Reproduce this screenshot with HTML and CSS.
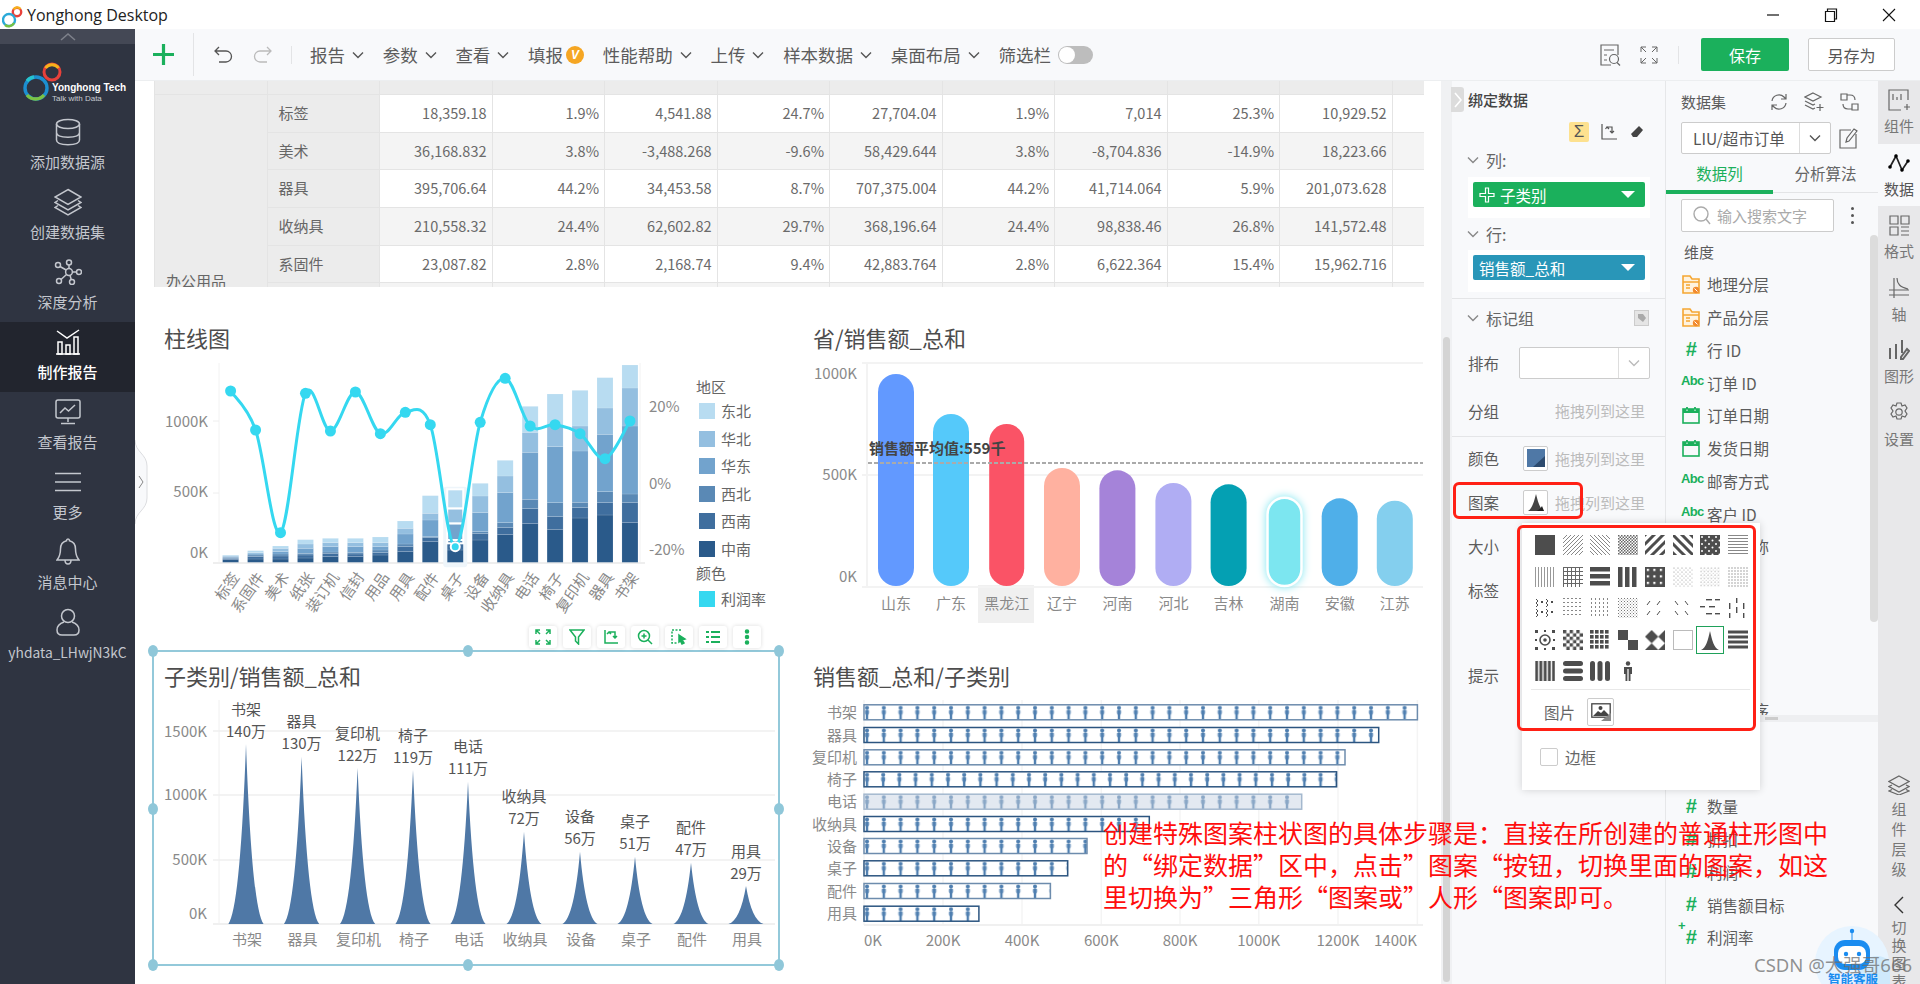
FILE: index.html
```html
<!DOCTYPE html>
<html lang="zh">
<head>
<meta charset="utf-8">
<title>Yonghong Desktop</title>
<link rel="stylesheet" href="styles.css">
</head>
<body>
<svg class="defs" width="0" height="0">
  <symbol id="chev" viewBox="0 0 12 8"><path d="M1 1.5l5 5 5-5" fill="none" stroke="currentColor" stroke-width="1.4"/></symbol>
  <symbol id="folder" viewBox="0 0 20 20"><path d="M2 2h7l2 3h7v14H2z" fill="#fff3df" stroke="#f5a733" stroke-width="1.6"/><path d="M2 8h16M5 11h4M5 14h4" stroke="#f5a733" stroke-width="1.3"/><circle cx="15" cy="16" r="3.2" fill="#f28a2e"/><path d="M13.5 14.5l3 3" stroke="#fff"/></symbol>
  <symbol id="cal" viewBox="0 0 20 20"><rect x="2" y="4" width="16" height="14" fill="none" stroke="#1bb05c" stroke-width="1.6"/><path d="M2 4h16v4H2z" fill="#1bb05c"/><path d="M6 2v4M14 2v4" stroke="#1bb05c" stroke-width="1.8"/><path d="M6 4.5v1.5M14 4.5v1.5" stroke="#fff"/></symbol>
</svg>

<header class="titlebar">
  <svg class="tlogo" width="22" height="26" viewBox="0 0 22 26">
    <circle cx="15" cy="9" r="4.2" fill="none" stroke="#e8413b" stroke-width="2.4"/>
    <path d="M11.5 6.5a4.2 4.2 0 0 1 7-.5" fill="none" stroke="#f6b21b" stroke-width="2.4"/>
    <circle cx="7" cy="17" r="6" fill="none" stroke="#2aa9d8" stroke-width="2.4"/>
    <path d="M3 22a6 6 0 0 0 9-2" fill="none" stroke="#75c043" stroke-width="2.4"/>
  </svg>
  <span class="ttext">Yonghong Desktop</span>
  <div class="winbtns">
    <svg width="14" height="14" viewBox="0 0 14 14"><path d="M1 7h12" stroke="#111" stroke-width="1.2"/></svg>
    <svg width="14" height="14" viewBox="0 0 14 14"><path d="M1.5 3.5h9v10h-9zM3.5 3.5v-2.5h9v10h-2" fill="none" stroke="#111" stroke-width="1.2"/></svg>
    <svg width="14" height="14" viewBox="0 0 14 14"><path d="M1 1l12 12M13 1L1 13" stroke="#111" stroke-width="1.1"/></svg>
  </div>
</header>

<div class="app">
  <aside class="sidebar">
    <div class="sb-handle"><svg width="16" height="9" viewBox="0 0 16 9"><path d="M1 8l7-6 7 6" fill="none" stroke="#7d808a" stroke-width="1.6"/></svg></div>
    <div class="sb-logo">
      <svg width="42" height="42" viewBox="0 0 42 42" class="logo-rings">
        <circle cx="29" cy="11" r="8" fill="none" stroke="#e8413b" stroke-width="3"/>
        <path d="M22.5 7a8 8 0 0 1 13 0" fill="none" stroke="#f6b21b" stroke-width="3"/>
        <circle cx="13" cy="27" r="11" fill="none" stroke="#1c8fd0" stroke-width="3.4"/>
        <path d="M4 34a11 11 0 0 0 17 0" fill="none" stroke="#7cc243" stroke-width="3.4"/>
        <path d="M4 20a11 11 0 0 1 7-4" fill="none" stroke="#26c3cf" stroke-width="3.4"/>
      </svg>
      <div class="logo-text"><b>Yonghong Tech</b><i>Talk with Data</i></div>
    </div>
    <a class="sb-item"><span class="sb-ic"><svg width="26" height="28" viewBox="0 0 26 28" class="ln"><ellipse cx="13" cy="6" rx="11.5" ry="4.6"/><path d="M1.5 6v16c0 3 5 4.7 11.5 4.7S24.500 25 24.500 22V6M1.500 14.500c0 3 5 4.700 11.500 4.700s11.500-1.700 11.500-4.700"/></svg></span><span>添加数据源</span></a>
    <a class="sb-item"><span class="sb-ic"><svg width="28" height="28" viewBox="0 0 28 28" class="ln"><path d="M14 1.500L27 9 14 16.500 1 9zM4 12.500L1 14.500 14 22 27 14.500l-3-2M4 17.500L1 19.500 14 27l13-7.500-3-2"/></svg></span><span>创建数据集</span></a>
    <a class="sb-item"><span class="sb-ic"><svg width="28" height="26" viewBox="0 0 28 26" class="ln"><circle cx="15" cy="13" r="3.400"/><circle cx="15" cy="3.500" r="2.500"/><circle cx="4" cy="6" r="2.500"/><circle cx="25" cy="13" r="2.500"/><circle cx="5" cy="22" r="2.500"/><circle cx="18" cy="23" r="2.500"/><path d="M15 6v3.600M6 7.500l6.200 3.500M18.400 13h4.100M7 20.500l5.500-5M16 16.300l1.300 4.400"/></svg></span><span>深度分析</span></a>
    <a class="sb-item sb-active"><span class="sb-ic"><svg width="26" height="26" viewBox="0 0 26 26" class="ln"><path d="M2 2l10 7 12-8M1 25h24"/><path d="M3 13h4v12H3zM11 16h4v9h-4zM19 8h4v17h-4z"/></svg></span><span>制作报告</span></a>
    <a class="sb-item"><span class="sb-ic"><svg width="26" height="26" viewBox="0 0 26 26" class="ln"><rect x="1" y="1" width="24" height="18" rx="2"/><path d="M5 14l5-5 3.500 3L20 6M13 19v4M6 24.500h14"/></svg></span><span>查看报告</span></a>
    <a class="sb-item"><span class="sb-ic"><svg width="26" height="20" viewBox="0 0 26 20" class="ln"><path d="M0 1.500h26M0 10h26M0 18.500h26"/></svg></span><span>更多</span></a>
    <a class="sb-item"><span class="sb-ic"><svg width="24" height="28" viewBox="0 0 24 28" class="ln"><path d="M12 1c-1 0-1.500.700-1.500 1.800C6.500 3.800 4.500 7 4.500 11c0 5-1 8-3.500 11h22c-2.500-3-3.500-6-3.500-11 0-4-2-7.200-6-8.200C13.500 1.700 13 1 12 1zM9 22c0 2.500 1.300 4 3 4s3-1.500 3-4"/></svg></span><span>消息中心</span></a>
    <a class="sb-item"><span class="sb-ic"><svg width="24" height="28" viewBox="0 0 24 28" class="ln"><circle cx="12" cy="8" r="6.500"/><path d="M8 14C3.500 15.500 1 18.500 1 22c0 3 2 5 5 5h12c3 0 5-2 5-5 0-3.500-2.500-6.500-7-8"/></svg></span><span class="sb-user">yhdata_LHwjN3kC</span></a>
  </aside>

  <main class="main">
    <nav class="toolbar">
      <svg class="t-plus" width="21" height="21" viewBox="0 0 21 21"><path d="M10.500 0v21M0 10.500h21" stroke="#1bb05c" stroke-width="3.200"/></svg>
      <i class="t-sep tall"></i>
      <svg class="t-undo" width="19" height="17" viewBox="0 0 19 17"><path d="M5 1L1 5l4 4M1 5h11a5.500 5.500 0 0 1 0 11H5" fill="none" stroke="#555" stroke-width="1.300"/></svg>
      <svg class="t-undo" width="19" height="17" viewBox="0 0 19 17"><path d="M14 1l4 4-4 4M18 5H7a5.500 5.500 0 0 0 0 11h7" fill="none" stroke="#bbb" stroke-width="1.300"/></svg>
      <i class="t-sep short"></i>
      <div class="menu">
        <span class="mi">报告<svg width="12" height="8"><use href="#chev"/></svg></span>
        <span class="mi">参数<svg width="12" height="8"><use href="#chev"/></svg></span>
        <span class="mi">查看<svg width="12" height="8"><use href="#chev"/></svg></span>
        <span class="mi">填报<b class="vbadge">V</b></span>
        <span class="mi">性能帮助<svg width="12" height="8"><use href="#chev"/></svg></span>
        <span class="mi">上传<svg width="12" height="8"><use href="#chev"/></svg></span>
        <span class="mi">样本数据<svg width="12" height="8"><use href="#chev"/></svg></span>
        <span class="mi">桌面布局<svg width="12" height="8"><use href="#chev"/></svg></span>
        <span class="mi">筛选栏<i class="toggle"></i></span>
      </div>
      <div class="t-right">
        <svg width="21" height="22" viewBox="0 0 21 22" class="gline"><path d="M18 11V1H1v20h10M4 6h10M4 11h3M4 16h3"/><circle cx="14" cy="15" r="4.500"/><path d="M17 18.500l3 3"/></svg>
        <svg class="t-full" width="18" height="18" viewBox="0 0 18 18"><path d="M6 1H1v5M1 1l5 5M12 1h5v5M17 1l-5 5M6 17H1v-5M1 17l5-5M12 17h5v-5M17 17l-5-5" fill="none" stroke="#666"/></svg>
        <i class="t-sep short right"></i>
        <button class="btn save">保存</button>
        <button class="btn saveas">另存为</button>
      </div>
    </nav>

    <div class="work">
      <section class="canvas">
        <div class="edge"><svg width="13" height="84" viewBox="0 0 13 84"><path d="M0 0c0 12 12 14 12 26v32c0 12-12 14-12 26" fill="#f8f9fb" stroke="#dcdde0"/><path d="M4 36l4 6-4 6" fill="none" stroke="#888"/></svg></div>
        <div class="table-wrap">
          <table class="grid-table">
            <colgroup><col><col><col><col><col><col><col><col><col><col><col><col></colgroup>
            <thead><tr><th></th><th></th><th>销售额</th><th>销售额占比</th><th>利润</th><th>利润率</th><th>销售额</th><th>销售额占比</th><th>利润</th><th>利润率</th><th>销售额</th><th>销售</th></tr></thead>
            <tbody>
              <tr><td class="head group" rowspan="6">办公用品</td><td class="head">标签</td><td>18,359.18</td><td>1.9%</td><td>4,541.88</td><td>24.7%</td><td>27,704.04</td><td>1.9%</td><td>7,014</td><td>25.3%</td><td>10,929.52</td><td></td></tr>
              <tr class="alt"><td class="head">美术</td><td>36,168.832</td><td>3.8%</td><td>-3,488.268</td><td>-9.6%</td><td>58,429.644</td><td>3.8%</td><td>-8,704.836</td><td>-14.9%</td><td>18,223.66</td><td></td></tr>
              <tr><td class="head">器具</td><td>395,706.64</td><td>44.2%</td><td>34,453.58</td><td>8.7%</td><td>707,375.004</td><td>44.2%</td><td>41,714.064</td><td>5.9%</td><td>201,073.628</td><td></td></tr>
              <tr class="alt"><td class="head">收纳具</td><td>210,558.32</td><td>24.4%</td><td>62,602.82</td><td>29.7%</td><td>368,196.64</td><td>24.4%</td><td>98,838.46</td><td>26.8%</td><td>141,572.48</td><td></td></tr>
              <tr><td class="head">系固件</td><td>23,087.82</td><td>2.8%</td><td>2,168.74</td><td>9.4%</td><td>42,883.764</td><td>2.8%</td><td>6,622.364</td><td>15.4%</td><td>15,962.716</td><td></td></tr>
              <tr class="alt"><td class="head"></td><td></td><td></td><td></td><td></td><td></td><td></td><td></td><td></td><td></td><td></td></tr>
            </tbody>
          </table>
        </div>
        <div class="charts">
          <article class="widget">
            <h2 class="w-title left">柱线图</h2>
            <div id="combo"></div>
            <div class="chart-tools">
              <span class="tool"><svg width="16" height="16" viewBox="0 0 16 16"><path d="M5 1H1v4M11 1h4v4M5 15H1v-4M11 15h4v-4M1 1l4 4M15 1l-4 4M1 15l4-4M15 15l-4-4"/></svg></span>
              <span class="tool"><svg width="16" height="16" viewBox="0 0 16 16"><path d="M1 1h14L9.500 8v7L6.500 12V8z"/></svg></span>
              <span class="tool"><svg width="16" height="16" viewBox="0 0 16 16"><path d="M2 1v13h13M6 3h6v6M4 5l2-2 2 2M10 7l2 2 2-2"/></svg></span>
              <span class="tool"><svg width="16" height="16" viewBox="0 0 16 16"><circle cx="7" cy="7" r="5.500"/><path d="M11 11l4 4M7 4.500v5M4.500 7h5"/></svg></span>
              <span class="tool"><svg width="16" height="16" viewBox="0 0 16 16"><path d="M10 1H1v13h5" stroke-dasharray="2 1.500"/><path d="M8 6l6 4-3 1 2 3-2 1-1.500-3L8 13z" fill="#1bb05c"/></svg></span>
              <span class="tool"><svg width="16" height="16" viewBox="0 0 16 16"><path d="M1 3h3M6 3h9M1 8h3M6 8h9M1 13h3M6 13h9" stroke-width="2.200"/></svg></span>
              <span class="tool"><svg width="16" height="16" viewBox="0 0 16 16"><circle cx="8" cy="2.500" r="1.500" fill="#1bb05c"/><circle cx="8" cy="8" r="1.500" fill="#1bb05c"/><circle cx="8" cy="13.500" r="1.500" fill="#1bb05c"/></svg></span>
            </div>
          </article>
          <article class="widget">
            <h2 class="w-title">省/销售额_总和</h2>
            <div id="pills"></div>
          </article>
          <article class="widget selected">
            <h2 class="w-title left">子类别/销售额_总和</h2>
            <div id="spikes"></div>
            <div class="sel-box">
              <i class="hd tl"></i><i class="hd tm"></i><i class="hd tr"></i><i class="hd ml"></i><i class="hd mr"></i><i class="hd bl"></i><i class="hd bm"></i><i class="hd br"></i>
            </div>
          </article>
          <article class="widget">
            <h2 class="w-title">销售额_总和/子类别</h2>
            <div id="people"></div>
          </article>
        </div>
      </section>

      <div class="gutter"><i></i></div>

      <section class="bind">
        <div class="b-handle"><svg width="8" height="16" viewBox="0 0 8 16"><path d="M1 1l6 7-6 7" fill="none" stroke="#fff" stroke-width="1.600"/></svg></div>
        <div class="b-head">绑定数据</div>
        <div class="b-icons">
          <span class="sigma">Σ</span>
          <svg width="17" height="19" viewBox="0 0 17 19"><path d="M1 1v15h15M6 4h5v6M4.500 6L6 4l2 2M9 8l2 2 2-2" fill="none" stroke="#555" stroke-width="1.200"/></svg>
          <svg width="14" height="14" viewBox="0 0 14 14"><path d="M9 1l4 4-6 7H3L1 9z" fill="#444"/></svg>
        </div>
        <div class="b-sect"><svg width="12" height="8"><use href="#chev"/></svg><span>列:</span></div>
        <div class="pillbox"><div class="pill green"><svg class="p-plus" width="16" height="16" viewBox="0 0 16 16"><path d="M6.500 1h3v5.500H15v3H9.500V15h-3V9.500H1v-3h5.500z" fill="none" stroke="#fff" stroke-width="1.200"/></svg><span>子类别</span><i class="tri"></i></div></div>
        <div class="b-sect second"><svg width="12" height="8"><use href="#chev"/></svg><span>行:</span></div>
        <div class="pillbox tall"><div class="pill blue"><span>销售额_总和</span><i class="tri"></i></div></div>
        <div class="b-rule"></div>
        <div class="b-sect marks"><svg width="12" height="8"><use href="#chev"/></svg><span>标记组</span><svg class="tag" width="15" height="16" viewBox="0 0 15 16"><rect x=".5" y=".5" width="14" height="15" fill="#e5e5e5" stroke="#ccc"/><path d="M4 4h5l3 4-3 4-5-4z" fill="#aaa"/></svg></div>
        <div class="f-row sel-row"><label>排布</label><div class="f-select"><i></i><svg width="12" height="8"><use href="#chev"/></svg></div></div>
        <div class="f-row group-row"><label>分组</label><span class="hint">拖拽列到这里</span></div>
        <div class="f-row color-row"><label>颜色</label><span class="swatch"><svg width="18" height="18" viewBox="0 0 18 18"><rect width="18" height="18" fill="#4f78a6"/><path d="M18 7v11H6z" fill="#2c4a6e"/></svg></span><span class="hint">拖拽列到这里</span></div>
        <div class="f-row"><label>图案</label><span class="swatch"><svg width="18" height="18" viewBox="0 0 18 18"><path d="M1 18C5 16 7 9 9 1c2 8 4 15 8 17z" fill="#444"/><path d="M9 18c3-1 5-3 6-5l2 5z" fill="#222"/></svg></span><span class="hint">拖拽列到这里</span></div>
        <div class="f-row"><label>大小</label></div>
        <div class="f-row"><label>标签</label></div>
        <div class="f-row tip-row"><label>提示</label></div>

        <div class="popup">
          <div class="pat-grid" id="patGrid"></div>
          <div class="pop-rule"></div>
          <div class="pop-pic"><span>图片</span><span class="pic-btn"><svg width="20" height="18" viewBox="0 0 20 18"><rect x=".8" y=".8" width="18.400" height="13.400" fill="#fff" stroke="#444" stroke-width="1.300"/><path d="M2 13l5-5 3 2 3-3 6 6z" fill="#444"/><circle cx="9.500" cy="5" r="2" fill="#444"/><path d="M20 10v8H10z" fill="#888"/></svg></span></div>
          <div class="pop-check"><i></i><span>边框</span></div>
        </div>
        <div class="redbox one"></div>
        <div class="redbox two"></div>
      </section>

      <section class="data">
        <div class="d-head"><span>数据集</span>
          <div class="d-icons">
            <svg width="20" height="20" viewBox="0 0 20 20" class="gline"><path d="M3 9a7 7 0 0 1 12-4l2 2M17 11a7 7 0 0 1-12 4l-2-2M17 2v5h-5M3 18v-5h5"/></svg>
            <svg width="20" height="20" viewBox="0 0 20 20" class="gline"><path d="M9 1l8 4-8 4-8-4zM1 9l8 4 2-1M1 13l8 4 2-1M16 12v7M12.500 15.500h7"/></svg>
            <svg width="20" height="20" viewBox="0 0 20 20" class="gline"><path d="M2 2h6v6H2zM13 12h6v6h-6zM8 3h3c3 0 5 2 5 5M13 17h-4c-3 0-5-2-5-5"/></svg>
          </div>
        </div>
        <div class="d-select-row">
          <div class="f-select ds"><span>LIU/超市订单</span><i></i><svg width="12" height="8"><use href="#chev"/></svg></div>
          <svg width="20" height="22" viewBox="0 0 20 22" class="gline"><path d="M17 7v14H1V3h11M7 15l1-4L15 2l3 2-8 10z"/></svg>
        </div>
        <div class="d-tabs"><span class="on">数据列</span><span>分析算法</span></div>
        <div class="d-search-row">
          <div class="d-search"><svg width="18" height="20" viewBox="0 0 18 20" class="gline lite"><circle cx="8" cy="8" r="7"/><path d="M13 13l4 5"/></svg><span>输入搜索文字</span></div>
          <span class="kebab"><i></i><i></i><i></i></span>
        </div>
        <div class="dim-title">维度</div>
        <ul class="fields">
          <li><svg width="20" height="20"><use href="#folder"/></svg>地理分层</li>
          <li><svg width="20" height="20"><use href="#folder"/></svg>产品分层</li>
          <li><b class="num">#</b>行 ID</li>
          <li><b class="abc">Abc</b>订单 ID</li>
          <li><svg width="20" height="20"><use href="#cal"/></svg>订单日期</li>
          <li><svg width="20" height="20"><use href="#cal"/></svg>发货日期</li>
          <li><b class="abc">Abc</b>邮寄方式</li>
          <li><b class="abc">Abc</b>客户 ID</li>
          <li><b class="abc">Abc</b>客户名称</li>
          <li><b class="abc">Abc</b>细分</li>
          <li><b class="abc">Abc</b>国家</li>
          <li><b class="abc">Abc</b>地区</li>
          <li><b class="abc">Abc</b>省</li>
          <li><b class="abc">Abc</b>产品排序</li>
        </ul>
        <div class="h-strip"><i></i></div>
        <ul class="fields measures">
          <li><b class="num">#</b>数量</li>
          <li><b class="num">#</b>折扣</li>
          <li><b class="num">#</b>利润</li>
          <li><b class="num">#</b>销售额目标</li>
          <li><b class="num calc"><sup>+</sup>#</b>利润率</li>
        </ul>
        <div class="v-thumb"></div>
      </section>

      <aside class="rail">
        <div class="r-item"><span class="r-ic"><svg width="22" height="22" viewBox="0 0 22 22" class="gline"><path d="M20 11V1H1v20h12M5 11V5M9 11V8M13 11V5M16 18h6M19 15v6"/></svg></span><span>组件</span></div>
        <div class="r-item on"><span class="r-ic"><svg width="22" height="20" viewBox="0 0 22 20"><path d="M2 14l6-11 6 14 6-9" fill="none" stroke="#222" stroke-width="1.700"/><circle cx="2" cy="14" r="1.800"/><circle cx="8" cy="3" r="1.800"/><circle cx="14" cy="17" r="1.800"/><circle cx="20" cy="8" r="1.800"/></svg></span><span>数据</span></div>
        <div class="r-item"><span class="r-ic"><svg width="21" height="21" viewBox="0 0 21 21" class="gline"><path d="M1 1h8v8H1zM12 1h8v8h-8zM1 12h8v8H1zM12 12h8M12 16h8M12 20h8"/></svg></span><span>格式</span></div>
        <div class="r-item"><span class="r-ic"><svg width="22" height="22" viewBox="0 0 22 22" class="gline"><path d="M6 1v20M1 13h20M9 1c0 6 3 9 11 11M1 18h20"/></svg></span><span>轴</span></div>
        <div class="r-item"><span class="r-ic"><svg width="22" height="22" viewBox="0 0 22 22" class="gline thick"><path d="M2 9v11M8 5v15M14 1v13M13 20l2 0 6-8-2-2-6 8z"/></svg></span><span>图形</span></div>
        <div class="r-item"><span class="r-ic"><svg width="22" height="22" viewBox="0 0 22 22" class="gline"><path d="M9 1h4l1 3 3-1 2 3-2 3 2 3-2 3-3-1-1 3H9l-1-3-3 1-2-3 2-3-2-3 2-3 3 1z"/><circle cx="11" cy="10" r="3.200"/></svg></span><span>设置</span></div>
        <div class="r-bottom">
          <span class="r-ic small"><svg width="22" height="20" viewBox="0 0 22 20" class="gline"><path d="M11 1l10 5.500-10 5.500L1 6.500zM4 10l-3 1.500L11 17l10-5.500-3-1.500M4 14.500l-3 1.500 10 4 10-4-3-1.500"/></svg></span>
          <span class="v-text">组</span><span class="v-text">件</span><span class="v-text">层</span><span class="v-text">级</span>
          <svg class="r-back" width="10" height="18" viewBox="0 0 10 18"><path d="M9 1L1 9l8 8" fill="none" stroke="#333" stroke-width="1.400"/></svg>
          <span class="v-text tight">切</span><span class="v-text tight">换</span><span class="v-text tight">图</span><span class="v-text tight">表</span>
        </div>
      </aside>
    </div>
  </main>

  <p class="note">创建特殊图案柱状图的具体步骤是：直接在所创建的普通柱形图中<br>的“绑定数据”区中，点击”图案“按钮，切换里面的图案，如这<br>里切换为”三角形“图案或”人形“图案即可。</p>
</div>

<div class="robot">
  <svg width="75" height="59" viewBox="0 0 75 59"><circle cx="37" cy="38" r="37" fill="#e7f4ff"/><circle cx="62" cy="48" r="17" fill="#cfe9fb"/><circle cx="37" cy="6" r="2.200" fill="#1a8cf0"/><path d="M37 8v7" stroke="#1a8cf0"/><rect x="19" y="15" width="36" height="30" rx="11" fill="#1a8cf0"/><rect x="23" y="21" width="28" height="18" rx="7" fill="#fff"/><circle cx="31" cy="29" r="2.200" fill="#1a8cf0"/><circle cx="44" cy="29" r="2.200" fill="#1a8cf0"/></svg>
  <b>智能客服</b>
</div>
<div class="watermark">CSDN @大强哥666</div>
<script src="script.js"></script>
</body>
</html>
```
FILE: styles.css
```css
*{box-sizing:border-box}
html,body{margin:0;height:984px;overflow:hidden}
body{width:1920px;position:relative;background:#fff;font-family:"Noto Sans CJK SC","Noto Sans",sans-serif;color:#555}
.defs{position:absolute}
h2,p,ul{margin:0;padding:0}
li{list-style:none}

.titlebar{height:29px;display:flex;align-items:center;padding-left:2px;background:#fff}
.tlogo{margin-top:2px}
.ttext{margin-left:3px;font:16px "Open Sans",sans-serif;color:#222}
.winbtns{margin-left:auto;display:flex;gap:44px;padding-right:24px}

.app{display:flex;height:955px;position:relative}
.sidebar{width:135px;flex:none;background:#2f3441;color:#c4c7ce;font-size:15px;display:flex;flex-direction:column}
.sb-handle{height:15px;background:#444855;display:flex;justify-content:center;align-items:center}
.sb-logo{height:68px;position:relative}
.logo-rings{position:absolute;left:23px;top:17px}
.logo-text{position:absolute;left:52px;top:37px;display:flex;flex-direction:column;color:#fff;line-height:11px}
.logo-text b{font:bold 10px/13px "Liberation Sans Narrow","Liberation Sans",sans-serif;white-space:nowrap}
.logo-text i{font:8px/10px "Liberation Sans Narrow","Liberation Sans",sans-serif;color:#c8ccd2}
.sb-item{height:70px;display:flex;flex-direction:column;align-items:center;white-space:nowrap;line-height:20px}
.sb-ic{height:40px;display:flex;align-items:center;justify-content:center}
.sb-active{background:#22252e;color:#fff;font-weight:500}
.sb-user{font-size:13.800px}
.ln{fill:none;stroke:currentColor;stroke-width:1.500}

.main{flex:1;display:flex;flex-direction:column;min-width:0}
.toolbar{height:52px;background:#f8f9fb;display:flex;align-items:center;padding-left:18px;border-bottom:1px solid #eceef0;flex:none}
.t-sep{display:block;width:1px;background:#e3e4e6;flex:none}
.t-sep.tall{height:43px;margin:0 0 0 19px}
.t-sep.short{height:18px;margin:0 18px 0 19px}
.t-undo{margin-left:20px}
.menu{display:flex;align-items:center;gap:18.700px;font-size:17.500px;color:#5c5c5c;line-height:24px}
.mi{display:flex;align-items:center;white-space:nowrap}
.mi svg{margin-left:7px;color:#555}
.vbadge{width:18px;height:18px;margin-left:3px;border-radius:50%;background:#f5a623;color:#fff;font:italic bold 12px/18px "Liberation Sans",sans-serif;text-align:center}
.toggle{width:35px;height:18px;margin-left:7px;border-radius:9px;background:#bdbdbd;position:relative}
.toggle::before{content:"";position:absolute;left:1px;top:1px;width:16px;height:16px;border-radius:50%;background:#fff}
.t-right{margin-left:auto;display:flex;align-items:center;padding-right:25px}
.t-full{margin-left:19px}
.t-sep.short.right{margin:0 22px 0 20px}
.gline{fill:none;stroke:#666;stroke-width:1.200}
.gline.lite{stroke:#aaa;stroke-width:1.400}
.gline.thick{stroke-width:2}
.btn{height:33px;font:16px "Noto Sans CJK SC",sans-serif;border-radius:2px;padding:0;cursor:pointer}
.save{width:88px;background:#1bb05c;border:0;color:#fff}
.saveas{width:87px;margin-left:19px;background:#fff;border:1px solid #ccc;color:#555}

.work{flex:1;display:flex;min-height:0}
.canvas{width:1306px;flex:none;background:#fff;position:relative;overflow:hidden}
.edge{position:absolute;left:0;top:359px;z-index:2;display:flex}
.table-wrap{margin-left:19px;width:1270px;height:206px;overflow:hidden}
.grid-table{margin-top:-25px;width:1350px;table-layout:fixed;border-collapse:collapse;font-size:14.500px;color:#6a6a6a}
.grid-table col{width:112.500px}
.grid-table th{height:38px;padding:0 0 9px 12px;background:#ececec;border:1px solid #e4e4e4;font-weight:400;text-align:left;font-size:15px;color:#666;white-space:nowrap;overflow:hidden}
.grid-table td{height:37.700px;padding:0 5px 2px 0;border:1px solid #e4e4e4;text-align:right;white-space:nowrap}
.grid-table tr.alt td{background:#f4f4f4}
.grid-table td.head,.grid-table tr.alt td.head{background:#ececec;text-align:left;padding-left:11px;font-size:15px;color:#666}
.grid-table td.group{vertical-align:bottom;padding-bottom:29px}

.charts{margin:25px 0 0 17px;display:grid;grid-template-columns:656px 633px;grid-template-rows:338px 330px}
.widget{position:relative}
.widget svg{display:block}
.w-title{margin:9px 0 1px 5px;height:32px;font:400 22px/32px "Noto Sans CJK SC",sans-serif;color:#4d4d4d}
.w-title.left{margin-left:12px}
.ax{font-size:15px;fill:#8a8a8a}
.ax2{font-size:15px;fill:#666}
.lab{font-size:15px;fill:#555}
.avg{font-size:15px;font-weight:700;fill:#444}

.chart-tools{position:absolute;left:377px;top:314px;display:flex;gap:6.500px;z-index:3}
.tool{width:27.500px;height:22px;background:#fff;border-radius:3px;box-shadow:0 0 4px rgba(0,0,0,.14);display:flex;align-items:center;justify-content:center}
.tool svg{fill:none;stroke:#1bb05c;stroke-width:1.500}
.sel-box{position:absolute;left:0;top:0;width:628px;height:316px;border:2px solid #93c9da;pointer-events:none}
.hd{position:absolute;width:10px;height:12px;border-radius:50%;background:#8fc7d9}
.tl,.ml,.bl{left:-6px}.tr,.mr,.br{right:-6px}.tm,.bm{left:309px}
.tl,.tm,.tr{top:-7px}.ml,.mr{top:151px}.bl,.bm,.br{bottom:-7px}

.gutter{width:11px;flex:none;background:#f0f1f3;padding:0 1px 0 2px;display:flex;align-items:flex-start}
.gutter i{display:block;width:7px;height:645px;margin-top:256px;background:#d4d4d4;border-radius:4px}

.bind{width:214px;flex:none;background:#f8f9fb;border-right:1px solid #e6e7e9;position:relative;font-size:15.500px;color:#5c5c5c}
.b-handle{position:absolute;left:-1px;top:6px;width:13px;height:25px;background:#dcdcdc;border-radius:0 3px 3px 0;display:flex;align-items:center;justify-content:center}
.b-head{height:40px;padding-left:16px;line-height:38px;font-weight:500;font-size:15px;color:#444}
.b-icons{height:22px;padding-right:21px;display:flex;justify-content:flex-end;align-items:center;gap:12px}
.sigma{width:20px;height:20px;background:#fde18f;border-radius:2px;text-align:center;font:17px/20px "Liberation Sans",sans-serif;color:#555}
.b-sect{height:34px;display:flex;align-items:center;gap:7px;color:#666;font-size:16px;padding:0 0 0 15px}
.b-sect svg{color:#888}
.b-sect.second{height:32px}
.b-sect.marks{height:38px;padding-right:16px}
.b-sect .tag{margin-left:auto}
.pillbox{margin-left:16px;width:182px;height:41px;background:#fff;padding:5px}
.pillbox.tall{height:42px}
.pill{height:25px;border-radius:2px;color:#fff;display:flex;align-items:center;padding:0 10px 0 6px;font-size:15.500px}
.pill.green{background:#1bb05c}
.pill.blue{background:#2996b8}
.p-plus{margin-right:5px;flex:none}
.tri{margin-left:auto;width:0;height:0;border:7px solid transparent;border-top:7px solid #fff;border-bottom:0}
.b-rule{height:7px;border-bottom:1px solid #e4e5e7}
.f-row{height:44px;padding-left:16px;display:flex;align-items:center;padding-bottom:2px}
.f-row label{width:55px;flex:none}
.f-row .hint{margin-left:auto;margin-right:20px;color:#bbb;font-size:15px}
.sel-row{height:32px;margin-top:11px}
.sel-row label{width:51px}
.group-row{height:57px;padding-top:7px;border-bottom:1px solid #e4e5e7}
.tip-row{margin-top:41px}
.f-select{width:131px;height:32px;background:#fff;border:1px solid #ccc;border-radius:2px;display:flex;align-items:center;color:#bbb}
.f-select i{margin-left:auto;width:1px;height:100%;background:#ddd}
.f-select svg{margin:0 9px}
.swatch{width:25px;height:25px;background:#fff;border:1px solid #ccc;border-radius:2px;display:flex;align-items:center;justify-content:center}

.popup{position:absolute;left:70px;top:442px;width:238px;height:267px;background:#fff;box-shadow:0 0 8px rgba(0,0,0,.16);z-index:5;padding-top:12px}
.pat-grid{display:grid;grid-template-columns:repeat(8,20px);column-gap:7.500px;row-gap:11.600px;padding-left:13px}
.pat-grid svg{display:block}
.pat-cell.on{outline:1.500px solid #1fa15a;outline-offset:3px}
.pop-rule{height:1px;margin:8px 10px 0 9px;background:#e8e8e8}
.pop-pic{margin-top:8px;height:28px;padding-left:22px;display:flex;align-items:center;gap:12px;font-size:15.500px;color:#666}
.pic-btn{width:27px;height:28px;border:1px solid #ccc;border-radius:2px;display:flex;align-items:center;justify-content:center}
.pop-check{margin:20px 0 0 18px;display:flex;align-items:center;gap:7px;font-size:15.500px;color:#666}
.pop-check i{width:18px;height:18px;border:1px solid #ccc;border-radius:2px;background:#fff}
.redbox{position:absolute;border:3.500px solid #ff2015;border-radius:6px;z-index:6;pointer-events:none}
.redbox.one{left:1px;top:401px;width:130px;height:37px}
.redbox.two{left:65px;top:444px;width:239px;height:206px}

.data{width:212px;flex:none;background:#f8f9fb;position:relative;font-size:15.500px;color:#5c5c5c;overflow:hidden}
.d-head{height:41px;padding:0 19px 0 15px;display:flex;align-items:center;justify-content:space-between;font-size:15px}
.d-icons{display:flex;gap:15px}
.d-select-row{display:flex;align-items:center;padding-left:15px;gap:8px;height:32px}
.f-select.ds{width:150px;color:#555;flex:none}
.f-select.ds span{padding-left:11px;white-space:nowrap;font-size:15.500px}
.d-tabs{height:39px;display:flex;border-bottom:1px solid #e3e4e6;padding-top:1px}
.d-tabs span{flex:1;text-align:center;line-height:36px;color:#666;font-size:15.500px}
.d-tabs .on{flex:0 0 107px;color:#1bb05c;border-bottom:4px solid #1bb05c;height:39px}
.d-search-row{margin-top:6px;padding-left:15px;display:flex;align-items:center;height:33px}
.d-search{width:153px;height:33px;background:#fff;border:1px solid #ccc;border-radius:2px;display:flex;align-items:center;padding-left:11px;gap:6px;color:#aaa;font-size:15px}
.kebab{margin-left:17px;display:flex;flex-direction:column;gap:4px}
.kebab i{width:3px;height:3px;border-radius:50%;background:#555;display:block}
.dim-title{margin-top:4px;height:32px;padding-left:18px;line-height:32px;font-size:15px}
.fields{height:447px;overflow:hidden}
.fields li{height:32.750px;display:flex;align-items:center;padding-left:15px;gap:6px;white-space:nowrap}
.fields li svg{flex:none;width:20px;height:20px}
.num,.abc{width:20px;flex:none;text-align:center;color:#1bb05c}
.num{font:italic bold 20px "Liberation Sans",sans-serif}
.abc{font:bold 13px "Liberation Sans",sans-serif;letter-spacing:-.7px;margin-top:-4px;text-align:left}
.calc{position:relative}
.calc sup{position:absolute;left:-3px;top:-8px;font-size:13px;font-style:normal}
.h-strip{height:7px;background:#eeeff1;position:relative}
.h-strip i{position:absolute;left:99px;top:2px;width:13px;height:3px;background:#ccc}
.measures{margin-top:68px;height:auto}
.v-thumb{position:absolute;right:0;top:154px;width:8px;height:387px;background:#dcdcdc;border-radius:4px}

.rail{width:42px;flex:none;background:#e8e8ea;font-size:15px;color:#777;display:flex;flex-direction:column;overflow:hidden}
.r-item{height:62.600px;flex:none;display:flex;flex-direction:column;align-items:center;line-height:14px}
.r-item.on{background:#f8f9fb;color:#555}
.r-ic{height:38px;flex:none;display:flex;align-items:center;justify-content:center}
.r-bottom{margin-top:314px;display:flex;flex-direction:column;align-items:center}
.r-ic.small{height:28px}
.v-text{line-height:20px;height:20px}
.v-text.tight{line-height:18px;height:18px}
.r-back{margin:17px 0 4px;display:block}

.note{position:absolute;left:1103px;top:787px;font-size:25px;line-height:32px;color:#ff0d0d;white-space:nowrap;z-index:8}
.robot{position:absolute;left:1815px;top:925px;width:75px;height:59px;overflow:hidden;z-index:9}
.robot svg{display:block}
.robot b{position:absolute;left:13px;top:46px;font-size:12.500px;line-height:16px;color:#1a8cf0;white-space:nowrap}
.watermark{position:absolute;left:1754px;top:951px;font:18.500px/28px "Noto Sans","Noto Sans CJK SC",sans-serif;color:rgba(110,110,110,.75);white-space:nowrap;z-index:10}
```
FILE: script.js
```js
function svg(w, h, x0, y0, body) {
  return '<svg width="' + w + '" height="' + h + '" viewBox="' + x0 + ' ' + y0 + ' ' + w + ' ' + h + '">' + body + '</svg>';
}
function txt(x, y, s, cls, anchor, extra) {
  return '<text x="' + x + '" y="' + (y - 1) + '" class="' + cls + '" text-anchor="' + (anchor || 'start') + '" dominant-baseline="central"' + (extra || '') + '>' + s + '</text>';
}
function line(x1, y1, x2, y2, c, w, extra) {
  return '<line x1="' + x1 + '" y1="' + y1 + '" x2="' + x2 + '" y2="' + y2 + '" stroke="' + c + '" stroke-width="' + (w || 1) + '"' + (extra || '') + '/>';
}
function rect(x, y, w, h, f, extra) {
  return '<rect x="' + x + '" y="' + y + '" width="' + w + '" height="' + h + '" fill="' + f + '"' + (extra || '') + '/>';
}

/* combo chart */
(function () {
  var cats = ['标签', '系固件', '美术', '纸张', '装订机', '信封', '用品', '用具', '配件', '桌子', '设备', '收纳具', '电话', '椅子', '复印机', '器具', '书架'];
  var stacks = [
    [719, 716, 712, 710, 707, 705], [717, 710, 705, 702, 698, 692], [717, 708, 702, 695, 685, 678],
    [714, 705, 700, 685, 672, 659], [710, 700, 696, 680, 668, 655], [710, 702, 697, 680, 668, 655],
    [705, 698, 690, 680, 668, 651], [695, 680, 672, 642, 625, 603], [665, 653, 650, 600, 580, 527],
    [690, 670, 660, 610, 565, 508], [660, 641, 635, 578, 528, 490], [644, 623, 608, 518, 468, 421],
    [611, 566, 538, 397, 337, 259], [628, 590, 548, 380, 318, 222], [594, 563, 547, 393, 318, 211],
    [585, 548, 515, 343, 264, 173], [608, 548, 522, 318, 204, 135]
  ];
  var colors = ['#2a5a8a', '#3f6e9e', '#5a89b5', '#72a3cd', '#94bfe0', '#b8dcf1'];
  var lineY = [213, 330, 638, 220, 333, 216, 341, 277, 314, 680, 307, 175, 318, 314, 341, 416, 303];
  var b = '';
  b += line(219, 363, 219, 563, '#f2f2f2', 1) + line(640, 363, 640, 563, '#f2f2f2', 1);
  b += line(213, 421, 219, 421, '#eee') + line(213, 493, 219, 493, '#eee') + line(213, 563, 645, 563, '#eee', 2);
  b += txt(208, 421, '1000K', 'ax', 'end') + txt(208, 491, '500K', 'ax', 'end') + txt(208, 552, '0K', 'ax', 'end');
  b += txt(649, 406, '20%', 'ax') + txt(649, 483, '0%', 'ax') + txt(649, 549, '-20%', 'ax');
  var base = 320 + 727 / 3;
  var pts = [];
  cats.forEach(function (c, i) {
    var x = 230.6 + i * 24.96;
    var prev = base;
    var st = stacks[i];
    if (i === 9) b += rect(x - 12, 320 + 500 / 3, 24, base - 320 - 500 / 3 + 5, '#eef5fa', ' rx="3"');
    for (var k = 0; k < 6; k++) {
      var top = 320 + st[k] / 3;
      var ex = (i === 9 && k >= 2) ? ' stroke="#fff" stroke-width="2"' : ' stroke="rgba(255,255,255,.25)" stroke-width=".5"';
      b += rect(x - 8, top, 16, prev - top, colors[k], ex);
      prev = top;
    }
    b += txt(x + 5, 574, c, 'ax', 'end', ' transform="rotate(-55 ' + (x + 5) + ' 574)"');
    pts.push([x, 320 + lineY[i] / 3]);
  });
  var d = 'M' + pts[0][0] + ',' + pts[0][1];
  for (var i = 0; i < pts.length - 1; i++) {
    var p0 = pts[i - 1] || pts[i], p1 = pts[i], p2 = pts[i + 1], p3 = pts[i + 2] || p2;
    d += 'C' + (p1[0] + (p2[0] - p0[0]) / 6) + ',' + (p1[1] + (p2[1] - p0[1]) / 6) + ' ' + (p2[0] - (p3[0] - p1[0]) / 6) + ',' + (p2[1] - (p3[1] - p1[1]) / 6) + ' ' + p2[0] + ',' + p2[1];
  }
  b += '<path d="' + d + '" fill="none" stroke="#35d8f0" stroke-width="3"/>';
  pts.forEach(function (p, i) {
    b += '<circle cx="' + p[0] + '" cy="' + p[1] + '" r="' + (i === 9 ? 4.5 : 5.5) + '" fill="#35d8f0"' + (i === 9 ? ' stroke="#fff" stroke-width="2"' : '') + '/>';
  });
  b += txt(696, 387, '地区', 'ax2');
  var names = ['东北', '华北', '华东', '西北', '西南', '中南'];
  var ly = [411, 439, 466, 494, 521, 549];
  names.forEach(function (n, i) {
    b += rect(699, ly[i] - 8, 16, 16, colors[5 - i]) + txt(721, ly[i], n, 'ax2');
  });
  b += txt(696, 573, '颜色', 'ax2') + rect(699, 591, 16, 16, '#35d8f0') + txt(721, 599, '利润率', 'ax2');
  document.getElementById('combo').innerHTML = svg(656, 296, 152, 354, b);
})();

/* capsule chart */
(function () {
  var cats = ['山东', '广东', '黑龙江', '辽宁', '河南', '河北', '吉林', '湖南', '安徽', '江苏'];
  var xs = [896, 951, 1006.7, 1062, 1117.4, 1173.4, 1228.6, 1284.5, 1339.7, 1394.8];
  var tops = [374, 414, 424, 468, 470.3, 483, 484.3, 495.7, 498.3, 500.7];
  var cols = ['#6299ff', '#55c9fa', '#fa5366', '#ffb1a0', '#a583d9', '#b0adf3', '#04a0b3', '#7ce6f0', '#4fafe9', '#84cfee'];
  var b = rect(978, 585, 56, 38, '#f0f0f0');
  b += line(862, 363, 1423, 363, '#f3f3f3', 2) + line(862, 475, 1423, 475, '#f3f3f3', 2) + line(862, 587, 1423, 587, '#f3f3f3', 2) + line(867, 363, 867, 587, '#f3f3f3', 2);
  b += txt(857, 373, '1000K', 'ax', 'end') + txt(857, 474, '500K', 'ax', 'end') + txt(857, 576, '0K', 'ax', 'end');
  cats.forEach(function (c, i) {
    var w = i === 2 ? 35 : 36;
    if (i === 7) {
      b += '<rect x="' + (xs[i] - 17) + '" y="' + (tops[i] + 2) + '" width="34" height="' + (584 - tops[i]) + '" rx="17" fill="' + cols[i] + '" stroke="#fff" stroke-width="2.500" class="glow"/>';
    } else {
      b += '<rect x="' + (xs[i] - w / 2) + '" y="' + tops[i] + '" width="' + w + '" height="' + (586 - tops[i]) + '" rx="' + w / 2 + '" fill="' + cols[i] + '"/>';
    }
    b += txt(xs[i], 603, c, 'ax', 'middle');
  });
  b += line(868, 463, 1423, 463, '#aaa', 2, ' stroke-dasharray="4 2"');
  b += txt(869, 448, '销售额平均值:559千', 'avg');
  document.getElementById('pills').innerHTML = svg(633, 296, 808, 354, b);
  var g = document.querySelector('.glow');
  if (g) g.setAttribute('filter', 'drop-shadow(0 0 4px #7ce6f0)');
})();

/* spike chart */
(function () {
  var cats = ['书架', '器具', '复印机', '椅子', '电话', '收纳具', '设备', '桌子', '配件', '用具'];
  var vals = ['140万', '130万', '122万', '119万', '111万', '72万', '56万', '51万', '47万', '29万'];
  var xs = [246, 301.6, 357.6, 413, 468, 524, 580, 635, 691, 746];
  var tops = [744, 756.7, 768, 770, 781.7, 831.7, 851.7, 856.7, 862.7, 886];
  var bt = 924, w = 17.6;
  var b = '';
  [731, 795, 860].forEach(function (y) { b += line(213, y, 775, y, '#f3f3f3', 2); });
  b += line(213, 924, 775, 924, '#f0f0f0', 2) + line(219, 700, 219, 924, '#f0f0f0');
  b += txt(207, 731, '1500K', 'ax', 'end') + txt(207, 794, '1000K', 'ax', 'end') + txt(207, 859, '500K', 'ax', 'end') + txt(207, 913, '0K', 'ax', 'end');
  cats.forEach(function (c, i) {
    var x = xs[i], h = bt - tops[i];
    b += '<path d="M' + (x - w) + ',' + bt + 'C' + (x - w * 0.55) + ',' + (bt - h * 0.06) + ' ' + (x - w * 0.22) + ',' + (bt - h * 0.4) + ' ' + x + ',' + tops[i] + 'C' + (x + w * 0.22) + ',' + (bt - h * 0.4) + ' ' + (x + w * 0.55) + ',' + (bt - h * 0.06) + ' ' + (x + w) + ',' + bt + 'Z" fill="#4f78a6"/>';
    b += txt(x, tops[i] - 35, c, 'lab', 'middle') + txt(x, tops[i] - 13, vals[i], 'lab', 'middle');
    b += txt(x + 1, 939, c, 'ax', 'middle');
  });
  document.getElementById('spikes').innerHTML = svg(656, 288, 152, 692, b);
})();

/* people bars */
(function () {
  var cats = ['书架', '器具', '复印机', '椅子', '电话', '收纳具', '设备', '桌子', '配件', '用具'];
  var ys = [712.3, 735, 757.3, 779.3, 801.7, 824, 846, 868.3, 891, 913.7];
  var ends = [1417.4, 1378.7, 1345, 1336.6, 1301.7, 1149.3, 1087, 1067.7, 1050.4, 978.9];
  var borders = ['#6d8cad', '#2c5580', '#6d8cad', '#2c5580', '#a4b8ce', '#2c5580', '#6d8cad', '#2c5580', '#6d8cad', '#2c5580'];
  var b = '<defs>';
  ys.forEach(function (y, i) {
    var step = i === 3 ? 16.2 : 16.8;
    var col = i === 4 ? '#8aa7c6' : '#4f7fb0';
    b += '<pattern id="pp' + i + '" patternUnits="userSpaceOnUse" x="864" y="' + (y - 8) + '" width="' + step + '" height="16">' +
      '<rect width="' + step + '" height="16" fill="' + (i === 4 ? '#e3e9f1' : '#fff') + '"/>' +
      '<rect x="0" y="6" width="6" height="3.500" rx="1" fill="' + col + '" opacity=".22"/>' +
      '<g fill="' + col + '"><circle cx="3" cy="3.600" r="2"/><rect x="1.300" y="5.500" width="3.400" height="5" rx="1"/><rect x="1.800" y="10" width="2.400" height="6"/></g></pattern>';
  });
  b += '</defs>';
  [864, 943, 1022, 1101.3, 1180, 1258.8, 1338, 1417.4].forEach(function (x) { b += line(x, 700, x, 925, '#f4f4f4', 1.5); });
  b += line(864, 925, 1423, 925, '#f0f0f0', 2);
  cats.forEach(function (c, i) {
    b += txt(857, ys[i], c, 'ax', 'end');
    b += rect(864, ys[i] - 7.5, ends[i] - 864, 15, 'url(#pp' + i + ')', ' stroke="' + borders[i] + '" stroke-width="1.500"');
  });
  b += txt(864, 940, '0K', 'ax');
  [[943, '200K'], [1022, '400K'], [1101.3, '600K'], [1180, '800K'], [1258.8, '1000K'], [1338, '1200K']].forEach(function (t) {
    b += txt(t[0], 940, t[1], 'ax', 'middle');
  });
  b += txt(1417, 940, '1400K', 'ax', 'end');
  document.getElementById('people').innerHTML = svg(633, 288, 808, 692, b);
})();

/* pattern picker */
(function () {
  var D = '#4d4d4d';
  function pat(id, w, h, body) {
    return '<defs><pattern id="' + id + '" patternUnits="userSpaceOnUse" width="' + w + '" height="' + h + '">' + body + '</pattern></defs>';
  }
  function diag(w, sw, c, rev) {
    var a = rev ? 'M-1,-1L' + (w + 1) + ',' + (w + 1) + 'M' + (-w / 2) + ',' + (w / 2) + 'L' + (w / 2) + ',' + (w * 1.5) + 'M' + (w / 2) + ',' + (-w / 2) + 'L' + (w * 1.5) + ',' + (w / 2)
      : 'M-1,' + (w + 1) + 'L' + (w + 1) + ',-1M' + (-w / 2) + ',' + (w / 2) + 'L' + (w / 2) + ',' + (-w / 2) + 'M' + (w / 2) + ',' + (w * 1.5) + 'L' + (w * 1.5) + ',' + (w / 2);
    return [w, w, '<path d="' + a + '" stroke="' + c + '" stroke-width="' + sw + '"/>'];
  }
  function r(x, y, w, h, c) { return '<rect x="' + x + '" y="' + y + '" width="' + w + '" height="' + h + '" fill="' + (c || D) + '"/>'; }
  function c(x, y, rr, col) { return '<circle cx="' + x + '" cy="' + y + '" r="' + rr + '" fill="' + (col || D) + '"/>'; }
  var specs = [
    [4, 4, r(0, 0, 4, 4)],
    diag(4, 1, '#888'), diag(4, 1, '#888', true),
    [3, 3, r(0, 0, 1.5, 1.5, '#666') + r(1.5, 1.5, 1.5, 1.5, '#666')],
    diag(9, 3, D), diag(9, 3, D, true),
    [7, 7, r(0, 0, 7, 7) + c(2, 2, 1, '#fff') + c(5.5, 5.5, 1, '#fff')],
    [20, 3, r(0, 0, 20, 1, '#888')],
    [3, 20, r(0, 0, 1, 20, '#999')],
    [4, 4, r(0, 0, 4, 1, '#666') + r(0, 0, 1, 4, '#666')],
    [20, 7, r(0, 0, 20, 4.5)],
    [7, 20, r(0, 0, 4.5, 20)],
    [6.5, 6.5, r(0, 0, 6.5, 6.5) + r(1.8, 1.8, 2.2, 2.2, '#fff')],
    [4, 4, c(1, 1, .6, '#888') + c(3, 3, .6, '#aaa')],
    [3.5, 3.5, c(1, 1, .6, '#999') + c(2.8, 2.8, .5, '#bbb')],
    [3, 3, c(1, 1, .7, '#888')],
    [10, 10, '<path d="M1 1l2 2-2 2 2 2-2 2M6 3l2 2M8 3l-2 2" fill="none" stroke="' + D + '" stroke-width="1"/>'],
    [4, 4, r(0, 0, 2, 1, '#888')],
    [4, 4, r(1, 0, 1, 2, '#888')],
    [3, 3, r(0, 0, 1, 1, '#777') + r(1.5, 1.5, 1, 1, '#999')],
    [10, 10, '<path d="M2 7l3-4" stroke="' + D + '"/>'],
    [10, 10, '<path d="M2 3l3 4" stroke="' + D + '"/>'],
    [20, 14, r(6, 1, 6, 1.4) + r(15, 1, 5, 1.4) + r(0, 8, 5, 1.4) + r(9, 8, 6, 1.4)],
    [14, 20, r(1, 5, 1.4, 6) + r(1, 15, 1.4, 5) + r(8, 0, 1.4, 5) + r(8, 9, 1.4, 6)],
    [20, 20, '<circle cx="10" cy="10" r="5" fill="none" stroke="' + D + '" stroke-width="1.600"/>' + c(10, 10, 1.8) + r(0, 0, 3, 3) + r(17, 0, 3, 3) + r(0, 17, 3, 3) + r(17, 17, 3, 3) + r(9, 0, 2, 2) + r(9, 18, 2, 2) + r(0, 9, 2, 2) + r(18, 9, 2, 2)],
    [6.66, 6.66, r(0, 0, 3.33, 3.33) + r(3.33, 3.33, 3.33, 3.33)],
    [5, 5, r(0, 0, 3.6, 3.6)],
    [20, 20, r(0, 0, 10, 10) + r(10, 10, 10, 10)],
    [13.3, 13.3, '<path d="M6.650 0l6.650 6.650-6.650 6.650L0 6.650z" fill="' + D + '"/>'],
    null,
    'tri',
    [20, 5, r(0, .5, 20, 3)],
    [4.2, 20, r(.3, 0, 2.8, 20)],
    'hbars', 'vbars', 'person'
  ];
  var out = '';
  specs.forEach(function (s, i) {
    var cell = '';
    if (s === null) cell = '<rect x=".5" y=".5" width="19" height="19" fill="#fff" stroke="#bbb"/>';
    else if (s === 'tri') cell = '<path d="M1 20C6 18 8 10 10 1c2 9 4 17 9 19z" fill="' + D + '"/>';
    else if (s === 'hbars') cell = '<rect y="0" width="20" height="5" rx="2.500" fill="' + D + '"/><rect y="7.500" width="20" height="5" rx="2.500" fill="' + D + '"/><rect y="15" width="20" height="5" rx="2.500" fill="' + D + '"/>';
    else if (s === 'vbars') cell = '<rect x="0" width="5" height="20" rx="2.500" fill="' + D + '"/><rect x="7.500" width="5" height="20" rx="2.500" fill="' + D + '"/><rect x="15" width="5" height="20" rx="2.500" fill="' + D + '"/>';
    else if (s === 'person') cell = '<circle cx="10" cy="2.500" r="2.200" fill="' + D + '"/><path d="M6 6h8v7h-1.500v7h-5v-7H6z" fill="' + D + '"/><rect x="9" y="8" width="2" height="12" fill="#bbb"/>';
    else {
      var id = 'sw' + i;
      cell = pat(id, s[0], s[1], s[2]) + '<rect width="20" height="20" fill="url(#' + id + ')"/>';
    }
    out += '<svg class="pat-cell' + (s === 'tri' ? ' on' : '') + '" width="20" height="20" viewBox="0 0 20 20">' + cell + '</svg>';
  });
  document.getElementById('patGrid').innerHTML = out;
})();
```
